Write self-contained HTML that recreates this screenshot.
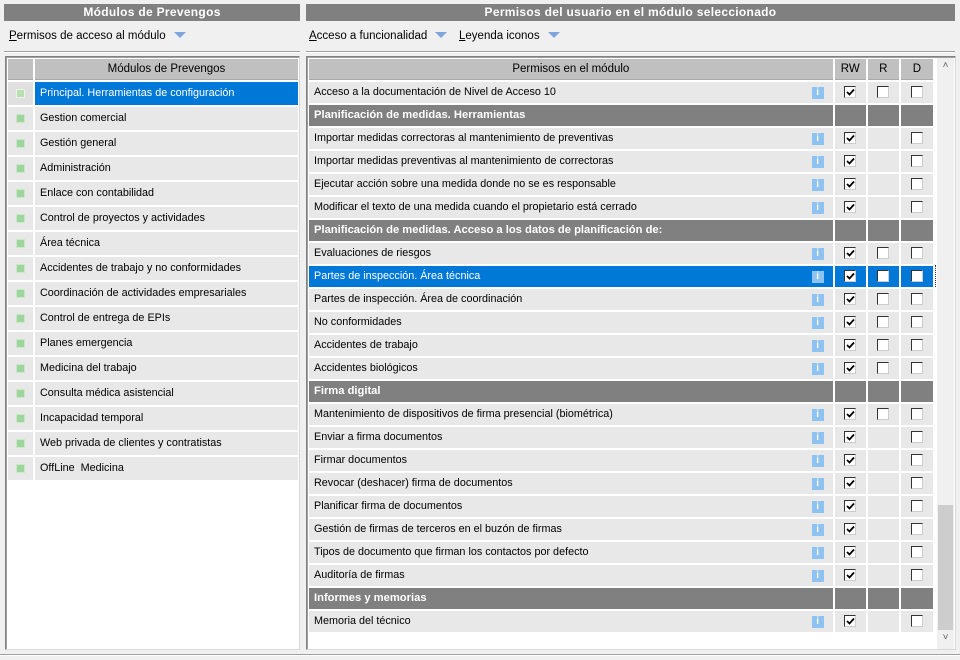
<!DOCTYPE html>
<html><head><meta charset="utf-8"><style>
*{margin:0;padding:0;box-sizing:border-box}
body{width:960px;height:660px;background:#f0f0f0;font-family:"Liberation Sans",Arial,sans-serif;font-size:10.8px;color:#000;position:relative;overflow:hidden}
.bar{position:absolute;top:4px;height:17px;background:#808080;color:#fff;font-weight:bold;font-size:12px;text-align:center;line-height:17px;letter-spacing:.3px}
.tb{position:absolute;top:30px;font-size:11.5px}
.tri{display:inline-block;width:0;height:0;border-left:6px solid transparent;border-right:6px solid transparent;border-top:6px solid #7fa6dc;margin-left:8px;vertical-align:1px}
.hl{position:absolute;height:2px;border-top:1px solid #a0a0a0;border-bottom:1px solid #fff}
.frame{position:absolute;background:#fff;border:1px solid #828282;border-right-color:#d8d8d8;border-bottom-color:#d8d8d8;box-shadow:inset 1px 1px 0 #a0a0a0}
table{position:absolute;border-collapse:separate;border-spacing:2px;table-layout:fixed}
td{height:21px;line-height:21px;background:#e8e8e8;padding:0 5px;white-space:nowrap;overflow:hidden;position:relative}
#l td{height:23px;line-height:23px}
th{height:21px;background:#c0c0c0;font-weight:normal;font-size:11.5px;text-align:center;border-bottom:1px solid #a8a8a8}
.g td{background:#808080;color:#fff;font-weight:bold;font-size:11.2px}
.sel td{background:#0078d7;color:#fff}
.c{text-align:center;padding:0}
.sq{display:inline-block;width:9px;height:9px;background:#9ed49e;border:1px solid #c8e8c8;vertical-align:middle}
.cb{display:inline-block;width:12px;height:12px;background:#fff;border:1px solid #333;border-right-color:#ccc;border-bottom-color:#ccc;vertical-align:middle;position:relative}
.cb svg{position:absolute;left:1px;top:1px}
.info{position:absolute;right:9px;top:5px;width:12px;height:12px;background:#8ec2f0;color:#fff;font-weight:bold;font-size:10px;line-height:12px;text-align:center}
</style></head><body>
<div class="bar" style="left:4px;width:296px">Módulos de Prevengos</div>
<div class="bar" style="left:306px;width:649px">Permisos del usuario en el módulo seleccionado</div>
<div class="tb" style="left:9px"><u>P</u>ermisos de acceso al módulo<span class="tri"></span></div>
<div class="tb" style="left:309px"><u>A</u>cceso a funcionalidad<span class="tri"></span></div>
<div class="tb" style="left:459px"><u>L</u>eyenda iconos<span class="tri"></span></div>
<div class="hl" style="left:4px;top:51px;width:296px"></div>
<div class="hl" style="left:306px;top:51px;width:649px"></div>
<div class="frame" style="left:5px;top:56px;width:295px;height:594px"></div>
<div class="frame" style="left:306px;top:56px;width:650px;height:594px"></div>

<table id="l" style="left:6px;top:57px;width:292px">
<colgroup><col style="width:25px"><col style="width:263px"></colgroup>
<tr><th></th><th>Módulos de Prevengos</th></tr>
<tr><td class="c" style="background:#e0e0e0"><span class="sq" style="background:#b8e0b0;border-color:#e8f4e8"></span></td><td style="background:#0078d7;color:#fff">Principal. Herramientas de configuración</td></tr>
<tr><td class="c"><span class="sq"></span></td><td>Gestion comercial</td></tr>
<tr><td class="c"><span class="sq"></span></td><td>Gestión general</td></tr>
<tr><td class="c"><span class="sq"></span></td><td>Administración</td></tr>
<tr><td class="c"><span class="sq"></span></td><td>Enlace con contabilidad</td></tr>
<tr><td class="c"><span class="sq"></span></td><td>Control de proyectos y actividades</td></tr>
<tr><td class="c"><span class="sq"></span></td><td>Área técnica</td></tr>
<tr><td class="c"><span class="sq"></span></td><td>Accidentes de trabajo y no conformidades</td></tr>
<tr><td class="c"><span class="sq"></span></td><td>Coordinación de actividades empresariales</td></tr>
<tr><td class="c"><span class="sq"></span></td><td>Control de entrega de EPIs</td></tr>
<tr><td class="c"><span class="sq"></span></td><td>Planes emergencia</td></tr>
<tr><td class="c"><span class="sq"></span></td><td>Medicina del trabajo</td></tr>
<tr><td class="c"><span class="sq"></span></td><td>Consulta médica asistencial</td></tr>
<tr><td class="c"><span class="sq"></span></td><td>Incapacidad temporal</td></tr>
<tr><td class="c"><span class="sq"></span></td><td>Web privada de clientes y contratistas</td></tr>
<tr><td class="c"><span class="sq"></span></td><td>OffLine&nbsp; Medicina</td></tr>
</table>

<table id="r" style="left:307px;top:57px;width:628px">
<colgroup><col style="width:522px"><col style="width:31px"><col style="width:31px"><col style="width:32px"></colgroup>
<tr><th>Permisos en el módulo</th><th>RW</th><th>R</th><th>D</th></tr>
</table>
<script>
var K='<span class="cb"><svg width="9" height="9" viewBox="0 0 9 9"><path d="M1 4l2.5 2.5L8 1.5" stroke="#000" stroke-width="1.8" fill="none"/></svg></span>';
var E='<span class="cb"></span>';
var rows=[["Acceso a la documentación de Nivel de Acceso 10",1],["G","Planificación de medidas. Herramientas"],
["Importar medidas correctoras al mantenimiento de preventivas",0],["Importar medidas preventivas al mantenimiento de correctoras",0],
["Ejecutar acción sobre una medida donde no se es responsable",0],["Modificar el texto de una medida cuando el propietario está cerrado",0],
["G","Planificación de medidas. Acceso a los datos de planificación de:"],["Evaluaciones de riesgos",1],["Partes de inspección. Área técnica",1,1],
["Partes de inspección. Área de coordinación",1],["No conformidades",1],["Accidentes de trabajo",1],["Accidentes biológicos",1],
["G","Firma digital"],["Mantenimiento de dispositivos de firma presencial (biométrica)",1],["Enviar a firma documentos",0],["Firmar documentos",0],
["Revocar (deshacer) firma de documentos",0],["Planificar firma de documentos",0],["Gestión de firmas de terceros en el buzón de firmas",0],
["Tipos de documento que firman los contactos por defecto",0],["Auditoría de firmas",0],["G","Informes y memorias"],["Memoria del técnico",0]];
var h='';rows.forEach(function(r){if(r[0]=="G"){h+='<tr class="g"><td>'+r[1]+'</td><td></td><td></td><td></td></tr>';}
else{h+='<tr'+(r[2]?' class="sel"':'')+'><td>'+r[0]+'<span class="info">i</span></td><td class="c">'+K+'</td><td class="c">'+(r[1]?E:'')+'</td><td class="c">'+E+'</td></tr>';}});
document.getElementById('r').insertAdjacentHTML('beforeend',h);
</script>
<div style="position:absolute;left:935px;top:265px;width:1px;height:22px;border-left:1px dotted #333"></div>
<div style="position:absolute;left:937px;top:58px;width:17px;height:591px;background:#f0f0f0"></div>
<div style="position:absolute;left:938px;top:505px;width:15px;height:125px;background:#cdcdcd"></div>
<div style="position:absolute;left:937px;top:60px;width:17px;text-align:center;font-size:10px;color:#606060">&#x2C4;</div>
<div style="position:absolute;left:937px;top:632px;width:17px;text-align:center;font-size:10px;color:#606060">&#x2C5;</div>
<div class="hl" style="left:0;top:654px;width:960px"></div>
</body></html>
